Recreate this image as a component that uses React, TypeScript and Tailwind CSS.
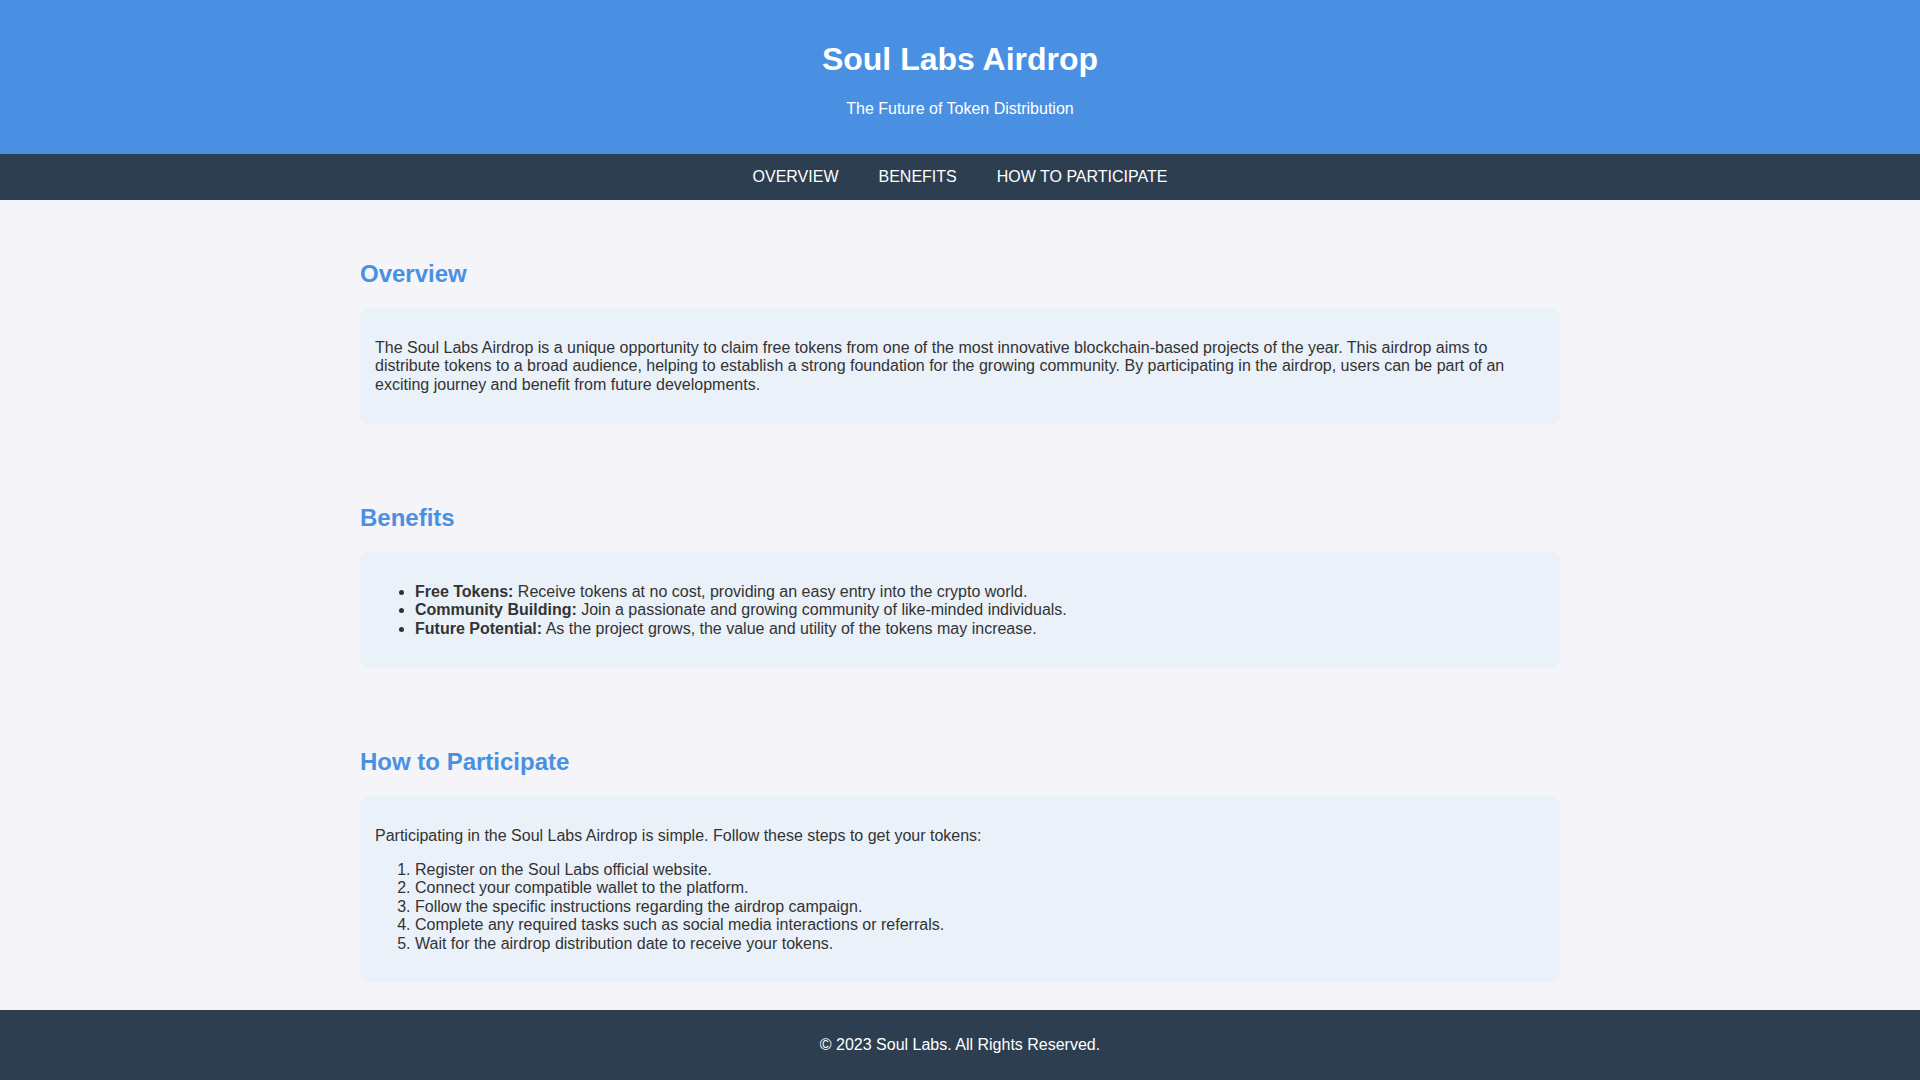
import React from 'react';

const navItems = ['Overview', 'Benefits', 'How to Participate'];

const benefits = [
  { title: 'Free Tokens:', text: 'Receive tokens at no cost, providing an easy entry into the crypto world.' },
  { title: 'Community Building:', text: 'Join a passionate and growing community of like-minded individuals.' },
  { title: 'Future Potential:', text: 'As the project grows, the value and utility of the tokens may increase.' },
];

const steps = [
  'Register on the Soul Labs official website.',
  'Connect your compatible wallet to the platform.',
  'Follow the specific instructions regarding the airdrop campaign.',
  'Complete any required tasks such as social media interactions or referrals.',
  'Wait for the airdrop distribution date to receive your tokens.',
];

const Section: React.FC<{ title: string; children: React.ReactNode }> = ({ title, children }) => (
  <section className="py-5">
    <h2 className="my-[20px] text-[24px] font-bold text-[#4a90e2]">{title}</h2>
    <div className="rounded-lg bg-[#eaf1f9] px-[15px] pt-[15px] pb-[14px]">{children}</div>
  </section>
);

export default function App() {
  return (
    <div className="flex min-h-screen flex-col bg-[#f4f4f9] font-['Liberation_Sans',Arial,sans-serif] text-base leading-[1.15] text-[#333]">
      <header className="bg-[#4a90e2] p-5 text-center text-white">
        <h1 className="my-[21.44px] text-[32px] font-bold">Soul Labs Airdrop</h1>
        <p className="my-4">The Future of Token Distribution</p>
      </header>

      <nav className="flex justify-center gap-10 bg-[#2c3e50] py-[14px]">
        {navItems.map((item) => (
          <a key={item} href={`#${item.toLowerCase().replace(/ /g, '-')}`} className="uppercase text-white">
            {item}
          </a>
        ))}
      </nav>

      <main className="mx-auto flex w-full max-w-[1200px] flex-col gap-5 pt-5 pb-[7px]">
        <Section title="Overview">
          <p className="my-4">
            The Soul Labs Airdrop is a unique opportunity to claim free tokens from one of the most innovative
            blockchain-based projects of the year. This airdrop aims to distribute tokens to a broad audience, helping
            to establish a strong foundation for the growing community. By participating in the airdrop, users can be
            part of an exciting journey and benefit from future developments.
          </p>
        </Section>

        <Section title="Benefits">
          <ul className="my-4 list-disc pl-10">
            {benefits.map((b) => (
              <li key={b.title}>
                <strong>{b.title}</strong> {b.text}
              </li>
            ))}
          </ul>
        </Section>

        <Section title="How to Participate">
          <p className="my-4">Participating in the Soul Labs Airdrop is simple. Follow these steps to get your tokens:</p>
          <ol className="my-4 list-decimal pl-10">
            {steps.map((s) => (
              <li key={s}>{s}</li>
            ))}
          </ol>
        </Section>
      </main>

      <footer className="flex-1 bg-[#2c3e50] py-[10px] text-center text-white">
        <p className="my-4">&copy; 2023 Soul Labs. All Rights Reserved.</p>
      </footer>
    </div>
  );
}
